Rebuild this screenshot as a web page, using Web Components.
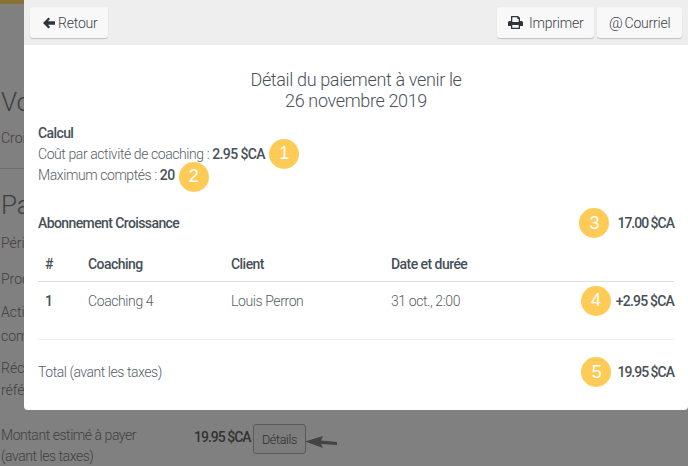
<!doctype html>
<html lang="fr"><head><meta charset="utf-8"><style>
html,body{margin:0;padding:0;height:466px;overflow:hidden}
body{font-family:"Roboto","Liberation Sans",sans-serif;font-weight:300;background:#808080;color:#474f58;font-size:14px}
</style></head><body>
<pay-page></pay-page>
<script>
function def(name,html){customElements.define(name,class extends HTMLElement{constructor(){super();this.attachShadow({mode:'open'}).innerHTML=html}})}
def('num-badge',`<style>:host{display:inline-flex;width:30px;height:30px;border-radius:50%;background:#ffcb57;color:#fff;align-items:center;justify-content:center;font:400 18px "Liberation Sans",sans-serif;flex:none}</style><slot></slot>`);
def('tool-btn',`<style>:host{display:inline-flex;align-items:center;box-sizing:border-box;height:31px;background:#f8f8f8;border-radius:3px;box-shadow:0 1px 1px rgba(0,0,0,.2);font:300 14px Roboto,sans-serif;letter-spacing:-.2px;color:#3c434b;white-space:nowrap}</style><slot></slot>`);
def('pay-back',`<style>:host{display:block;position:absolute;inset:0;background:#808080;overflow:hidden;color:#3f3f3f;font:300 14px Roboto,sans-serif}
.gold{height:4px;width:24px;background:#8a7136}
.t{position:absolute;left:1px;white-space:nowrap}
</style><div class="gold"></div>
<div class="t" style="top:87px;font-size:26px">Vo</div>
<div class="t" style="top:130px">Croi</div>
<div style="position:absolute;left:0;top:168px;width:24px;height:1px;background:#6e6e6e"></div>
<div class="t" style="top:190px;font-size:26px">Pa</div>
<div class="t" style="top:235px">Péri</div>
<div class="t" style="top:271px">Proc</div>
<div class="t" style="top:300px;line-height:24px">Acti<br>com</div>
<div class="t" style="top:357px;line-height:22px">Réco<br>réfé</div>
<div class="t" style="top:425px;line-height:21px;letter-spacing:-.45px">Montant estimé à payer<br>(avant les taxes)</div>
<div class="t" style="left:194px;top:429px;font-weight:500;letter-spacing:-1px;color:#333">19.95 $CA</div>
<div style="position:absolute;left:253px;top:424px;width:53px;height:30px;box-sizing:border-box;border:1px solid #5a5a5a;border-radius:3px;background:#7d7d7d;display:flex;align-items:center;justify-content:center;font-size:12.5px;letter-spacing:-.3px;color:#2c2c2c">Détails</div>
<svg style="position:absolute;left:305px;top:434px" width="34" height="16" viewBox="0 0 34 16"><path d="M0 7.500 L18 2 L16 6.500 L32 8 L32 11 L16 10 L18 14 Z" fill="#444"/></svg>`);
def('pay-modal',`<style>:host{display:block;position:absolute;left:24px;top:0;width:664px;height:410px;box-sizing:border-box;background:#fff;border-radius:0 0 4px 4px;font:300 14px Roboto,sans-serif;color:#565d65}
header{height:45px;background:#eee;display:flex;align-items:center;padding:0 6px;gap:3px;box-sizing:border-box}
.sp{flex:1}
main{padding:24px 14px 0}
h1{margin:0;font:300 18px/21px Roboto,sans-serif;letter-spacing:-.35px;text-align:center;color:#4a515a}
b{font-weight:500;color:#474f58;letter-spacing:-.6px}
.calc{margin-top:11px}
.calc>div{height:21px;display:flex;align-items:center;white-space:nowrap;letter-spacing:-.42px}
.calc num-badge{margin-left:4px}
.calc num-badge.low{position:relative;top:2px;margin-left:4px}
.sub{height:40px;margin-top:18px;display:flex;align-items:center;justify-content:space-between}
.amt{display:flex;align-items:center;gap:8px}
.amt b{letter-spacing:-1px}
.grid{display:grid;grid-template-columns:42px 143px 160px 1fr auto;margin-top:3px}
.grid>*{display:flex;align-items:center;padding-left:8px}
.grid>:first-child,.grid>.n{padding-left:7px}
.h{height:36px;box-sizing:border-box;border-bottom:1px solid #ddd;font-weight:500;color:#474f58;letter-spacing:-.55px}
.c{height:37px;letter-spacing:-.4px}
.c.n{font-weight:500;color:#474f58}
.c.r{justify-content:flex-end;padding:0;gap:5px}
.c.r b{letter-spacing:-.8px}
.total{border-top:1px solid #eee;margin-top:20px;height:64px;display:flex;align-items:center;justify-content:space-between;letter-spacing:-.45px}
.total .amt{gap:6px}
svg{display:block;flex:none}
.back{padding:0 11px 0 13px;width:78px;gap:3px}
.print{padding:0 11px;width:97px;gap:6px}
.mail{padding:0 12px;width:85px}
.at{font-size:15px;margin-right:2px}
</style>
<header>
<tool-btn class="back"><svg width="12" height="12" viewBox="0 0 12 12"><path d="M0 6 L5.500 .5 L7 2 L5 4.300 H12 V7.700 H5 L7 10 L5.500 11.500 Z" fill="#2f353b"/></svg>Retour</tool-btn>
<div class="sp"></div>
<tool-btn class="print"><svg width="15" height="13" viewBox="0 0 15 13"><path fill="#2f353b" d="M3 0h7l2 1.800V5h1.500A1.500 1.500 0 0 1 15 6.500V10h-3v3H3v-3H0V6.500A1.500 1.500 0 0 1 1.500 5H3zM4.300 1.300V6h6.400V3H9.300V1.300zM4.300 9v2.700h6.400V9z"/></svg>Imprimer</tool-btn>
<tool-btn class="mail"><span class="at">@</span>Courriel</tool-btn>
</header>
<main>
<h1>Détail du paiement à venir le<br>26 novembre 2019</h1>
<div class="calc">
<div><b>Calcul</b></div>
<div>Coût par activité de coaching :&nbsp;<b>2.95 $CA</b><num-badge>1</num-badge></div>
<div>Maximum comptés :&nbsp;<b>20</b><num-badge class="low">2</num-badge></div>
</div>
<div class="sub"><b>Abonnement Croissance</b><div class="amt"><num-badge>3</num-badge><b>17.00 $CA</b></div></div>
<div class="grid">
<div class="h">#</div><div class="h">Coaching</div><div class="h">Client</div><div class="h">Date et durée</div><div class="h"></div>
<div class="c n">1</div><div class="c">Coaching 4</div><div class="c">Louis Perron</div><div class="c">31 oct., 2:00</div><div class="c r"><num-badge>4</num-badge><b>+2.95 $CA</b></div>
</div>
<div class="total"><span>Total (avant les taxes)</span><div class="amt"><num-badge>5</num-badge><b>19.95 $CA</b></div></div>
</main>`);
def('pay-page',`<style>:host{display:block;position:relative;width:688px;height:466px;overflow:hidden}</style><pay-back></pay-back><pay-modal></pay-modal>`);
</script>
</body></html>
